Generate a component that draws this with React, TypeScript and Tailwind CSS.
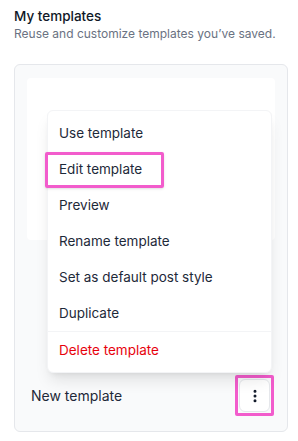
import { EllipsisVertical } from "lucide-react";

const items = [
  "Use template",
  "Edit template",
  "Preview",
  "Rename template",
  "Set as default post style",
  "Duplicate",
];

export default function App() {
  return (
    <div
      className="w-[298px] h-[441px] bg-white pl-[14px] pr-[10px] pt-[6px] text-gray-900"
      style={{ fontFamily: "Inter, 'Noto Sans', sans-serif" }}
    >
      <h2 className="text-[13.5px] leading-5 font-medium text-gray-900">My templates</h2>
      <p className="whitespace-nowrap text-[12px] leading-5 text-gray-500 mt-[-2px]">
        Reuse and customize templates you’ve saved.
      </p>

      <div className="relative mt-[20px] rounded-md border border-gray-200 bg-[#f9fafb]">
        <div className="px-3 pt-[13px]">
          <div className="h-[162px] rounded-sm bg-white" />
        </div>
        <div className="flex items-center justify-between pl-4 pr-[13px] pt-[135px] pb-[15px]">
          <span className="text-[14px] text-gray-800">New template</span>
          <div className="rounded-[2px] border-[3px] border-[#f25ccc] p-px">
            <button className="flex h-[33px] w-[31px] items-center justify-center rounded-md border border-gray-200 bg-white text-gray-900">
              <EllipsisVertical className="h-4 w-4" strokeWidth={2.5} />
            </button>
          </div>
        </div>

        <div className="absolute left-[32px] top-[45px] w-[225px] rounded-md border border-gray-100 bg-white py-1 shadow-lg">
          {items.map((label, i) => (
            <div key={label} className="relative flex h-9 items-center px-[11px] text-[13.5px] text-gray-800">
              {i === 1 && (
                <div className="absolute left-[-3px] top-[1px] h-[36px] w-[119px] rounded-[2px] border-[3px] border-[#f25ccc] shadow-sm" />
              )}
              {label}
            </div>
          ))}
          <div className="h-px bg-gray-100" />
          <div className="flex h-9 items-center px-[11px] text-[13.5px] text-red-600">Delete template</div>
        </div>
      </div>
    </div>
  );
}
